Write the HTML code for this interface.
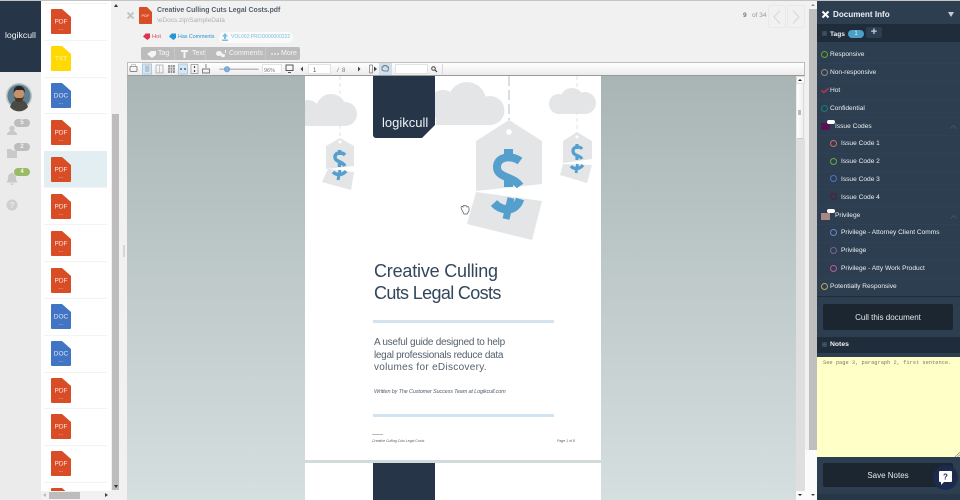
<!DOCTYPE html>
<html><head><meta charset="utf-8"><style>
*{box-sizing:border-box}
html,body{margin:0;padding:0;width:960px;height:500px;overflow:hidden;background:#f1f1f1;font-family:"Liberation Sans",sans-serif}
.a{position:absolute}
.t{position:absolute;color:#edf0f3;font-size:6.600px;white-space:nowrap;line-height:10px;margin-top:1px}
.r{position:absolute;width:7px;height:7px;border-radius:50%;border:1.300px solid}
.ln{position:absolute;left:817px;width:143px;height:1px;background:#2f4154}
.pt{position:absolute;color:#2f4053;white-space:nowrap}
</style></head><body>
<div class="a" style="left:0;top:0;width:960px;height:1px;background:#c4c4c4;z-index:5"></div>

<!-- left rail -->
<div class="a" style="left:0;top:0;width:41px;height:500px;background:#ebebeb"></div>
<div class="a" style="left:0;top:1px;width:41px;height:71px;background:#263648"></div>
<div class="a" style="left:5px;top:30px;color:#f2f4f6;font-size:8.700px;line-height:11px">logikcull</div>
<svg class="a" style="left:0;top:80px" width="41" height="140" viewBox="0 0 41 140">
<circle cx="19" cy="16" r="13" fill="#b9c2c4"/><circle cx="19" cy="16" r="11.500" fill="#5f7f8f"/>
<path d="M10 27c2-6 5-7 9-7s7 1 9 7a11.500 11.500 0 0 1-18 0z" fill="#4b4a42"/>
<ellipse cx="19" cy="14" rx="5" ry="6.500" fill="#c4916a"/><path d="M13.500 13c0-6 3-7 5.500-7s6 1 6 7l-2-3h-7z" fill="#2e2620"/><path d="M14 16c1 5 3 6 5 6s4-1 5-6l-2 2h-6z" fill="#4a3628"/>
<circle cx="12" cy="48.500" r="2.800" fill="#c9c9c9"/><path d="M7 55c0-3 2-4 5-4s5 1 5 4z" fill="#c9c9c9"/>
<path d="M7 69h4l1.500 1.500H17V78H7z" fill="#c9c9c9"/>
<path d="M12 92.500a1 1 0 0 1 1 1c3 .5 3 3 3 5s1 3 1.500 4h-11c.5-1 1.500-2 1.500-4s0-4.500 3-5a1 1 0 0 1 1-1z" fill="#c9c9c9"/><path d="M10.500 103.500h3a1.500 1.500 0 0 1-3 0z" fill="#c9c9c9"/>
<circle cx="12" cy="125" r="5.500" fill="#cfcfcf"/>
<text x="12" y="128" font-family="Liberation Sans" font-size="8" font-weight="bold" fill="#ebebeb" text-anchor="middle">?</text>
</svg>
<div class="a" style="left:14px;top:119px;width:16px;height:8px;border-radius:4px;background:#bdbdbd;color:#f3f3f3;font-size:6px;line-height:8px;text-align:center;font-weight:bold">5</div>
<div class="a" style="left:14px;top:143px;width:16px;height:8px;border-radius:4px;background:#bdbdbd;color:#f3f3f3;font-size:6px;line-height:8px;text-align:center;font-weight:bold">2</div>
<div class="a" style="left:14px;top:168px;width:16px;height:8px;border-radius:4px;background:#99bb66;color:#f3f3f3;font-size:6px;line-height:8px;text-align:center;font-weight:bold">4</div>

<!-- file list -->
<div class="a" style="left:41px;top:1px;width:70px;height:490px;background:#fff;overflow:hidden">
<svg width="70" height="499" viewBox="41 1 70 499" style="position:absolute;left:0;top:0">
<rect x="44" y="151" width="63" height="36.500" fill="#e3eef2"/>
<path stroke="#f3f3f3" stroke-width="1" d="M44 3.500h63M44 40.500h63M44 77.500h63M44 113.500h63M44 187.500h63M44 224.500h63M44 261.500h63M44 298.500h63M44 335.500h63M44 372.500h63M44 408.500h63M44 445.500h63M44 482.500h63"/>
<g font-family="Liberation Sans" font-size="6.500" text-anchor="middle" fill="#fde9e2">
<g transform="translate(0,9)"><path d="M52 0h10l9 8v16a1 1 0 0 1-1 1H52a1 1 0 0 1-1-1V1a1 1 0 0 1 1-1z" fill="#d84c26"/><text x="61" y="14.500">PDF</text><text x="61" y="21" font-size="5">...</text></g>
<g transform="translate(0,46)" fill="#fff6c0"><path d="M52 0h10l9 8v16a1 1 0 0 1-1 1H52a1 1 0 0 1-1-1V1a1 1 0 0 1 1-1z" fill="#ffd900"/><text x="61" y="14.500">TXT</text><text x="61" y="21" font-size="5">...</text></g>
<g transform="translate(0,83)" fill="#dbe6f6"><path d="M52 0h10l9 8v16a1 1 0 0 1-1 1H52a1 1 0 0 1-1-1V1a1 1 0 0 1 1-1z" fill="#4274c4"/><text x="61" y="14.500">DOC</text><text x="61" y="21" font-size="5">...</text></g>
<g transform="translate(0,120)"><path d="M52 0h10l9 8v16a1 1 0 0 1-1 1H52a1 1 0 0 1-1-1V1a1 1 0 0 1 1-1z" fill="#d84c26"/><text x="61" y="14.500">PDF</text><text x="61" y="21" font-size="5">...</text></g>
<g transform="translate(0,157)"><path d="M52 0h10l9 8v16a1 1 0 0 1-1 1H52a1 1 0 0 1-1-1V1a1 1 0 0 1 1-1z" fill="#d84c26"/><text x="61" y="14.500">PDF</text><text x="61" y="21" font-size="5">...</text></g>
<g transform="translate(0,194)"><path d="M52 0h10l9 8v16a1 1 0 0 1-1 1H52a1 1 0 0 1-1-1V1a1 1 0 0 1 1-1z" fill="#d84c26"/><text x="61" y="14.500">PDF</text><text x="61" y="21" font-size="5">...</text></g>
<g transform="translate(0,231)"><path d="M52 0h10l9 8v16a1 1 0 0 1-1 1H52a1 1 0 0 1-1-1V1a1 1 0 0 1 1-1z" fill="#d84c26"/><text x="61" y="14.500">PDF</text><text x="61" y="21" font-size="5">...</text></g>
<g transform="translate(0,268)"><path d="M52 0h10l9 8v16a1 1 0 0 1-1 1H52a1 1 0 0 1-1-1V1a1 1 0 0 1 1-1z" fill="#d84c26"/><text x="61" y="14.500">PDF</text><text x="61" y="21" font-size="5">...</text></g>
<g transform="translate(0,304)" fill="#dbe6f6"><path d="M52 0h10l9 8v16a1 1 0 0 1-1 1H52a1 1 0 0 1-1-1V1a1 1 0 0 1 1-1z" fill="#4274c4"/><text x="61" y="14.500">DOC</text><text x="61" y="21" font-size="5">...</text></g>
<g transform="translate(0,341)" fill="#dbe6f6"><path d="M52 0h10l9 8v16a1 1 0 0 1-1 1H52a1 1 0 0 1-1-1V1a1 1 0 0 1 1-1z" fill="#4274c4"/><text x="61" y="14.500">DOC</text><text x="61" y="21" font-size="5">...</text></g>
<g transform="translate(0,378)"><path d="M52 0h10l9 8v16a1 1 0 0 1-1 1H52a1 1 0 0 1-1-1V1a1 1 0 0 1 1-1z" fill="#d84c26"/><text x="61" y="14.500">PDF</text><text x="61" y="21" font-size="5">...</text></g>
<g transform="translate(0,414)"><path d="M52 0h10l9 8v16a1 1 0 0 1-1 1H52a1 1 0 0 1-1-1V1a1 1 0 0 1 1-1z" fill="#d84c26"/><text x="61" y="14.500">PDF</text><text x="61" y="21" font-size="5">...</text></g>
<g transform="translate(0,451)"><path d="M52 0h10l9 8v16a1 1 0 0 1-1 1H52a1 1 0 0 1-1-1V1a1 1 0 0 1 1-1z" fill="#d84c26"/><text x="61" y="14.500">PDF</text><text x="61" y="21" font-size="5">...</text></g>
<g transform="translate(0,488)"><path d="M52 0h10l9 8v16a1 1 0 0 1-1 1H52a1 1 0 0 1-1-1V1a1 1 0 0 1 1-1z" fill="#d84c26"/></g>
</g>
</svg>
</div>
<div class="a" style="left:111px;top:1px;width:9px;height:489px;background:#f1f1f1"></div>
<div class="a" style="left:112px;top:114px;width:7px;height:376px;background:#bdbdbd"></div>
<div class="a" style="left:114px;top:4px;border:2.500px solid transparent;border-bottom:3px solid #333;border-top:0"></div>
<div class="a" style="left:114px;top:485px;border:2.500px solid transparent;border-top:3px solid #333;border-bottom:0"></div>
<div class="a" style="left:41px;top:491px;width:79px;height:9px;background:#f1f1f1"></div>
<div class="a" style="left:49px;top:492px;width:31px;height:7px;background:#bdbdbd"></div>
<div class="a" style="left:43px;top:493px;border:2.500px solid transparent;border-right:3px solid #bbb;border-left:0"></div>
<div class="a" style="left:105px;top:493px;border:2.500px solid transparent;border-left:3px solid #444;border-right:0"></div>

<!-- header -->
<svg class="a" style="left:126px;top:11px" width="9" height="9" viewBox="0 0 9 9"><path d="M1.500 1.500l6 6M7.500 1.500l-6 6" stroke="#c4c4c4" stroke-width="2"/></svg>
<svg class="a" style="left:139px;top:7px" width="13" height="17" viewBox="0 0 13 17"><path d="M.8 0H8l5 5v11.200a.8.8 0 0 1-.8.800H.8a.8.8 0 0 1-.8-.800V.8A.8.8 0 0 1 .8 0z" fill="#d84c26"/><text x="6.500" y="10" font-family="Liberation Sans" font-size="4" fill="#fbe4dc" text-anchor="middle">PDF</text></svg>
<div class="a" style="left:157px;top:5px;font-size:6.900px;font-weight:bold;color:#55606c;line-height:11px;white-space:nowrap">Creative Culling Cuts Legal Costs.pdf</div>
<div class="a" style="left:157px;top:16px;font-size:6.500px;color:#b0b0b0;line-height:10px">\eDocs.zip\SampleData</div>

<svg class="a" style="left:143px;top:33px" width="7" height="7" viewBox="0 0 8 8"><path d="M0 4l3-3.500h5v5l-3 2.500z" fill="#e0334d"/></svg>
<div class="a" style="left:152px;top:32px;font-size:5.800px;color:#e0485f;line-height:10px">Hot</div>
<svg class="a" style="left:169px;top:33px" width="7" height="7" viewBox="0 0 8 8"><path d="M0 4l3-3.500h5v5l-3 2.500z" fill="#2298d0"/></svg>
<div class="a" style="left:178px;top:32px;font-size:5.300px;color:#2298d0;line-height:10px;white-space:nowrap">Has Comments</div>
<div class="a" style="left:219px;top:32px;width:74px;height:11px;border-radius:6px;background:#fafafa"></div>
<svg class="a" style="left:221px;top:33px" width="8" height="8" viewBox="0 0 8 8"><path d="M4 0l3 3.500H5V6H3V3.500H1zM1 6.500h6V8H1z" fill="#79c0dd"/></svg>
<div class="a" style="left:231px;top:32px;font-size:5px;color:#79c0dd;line-height:10px;white-space:nowrap">VOL002:PROD000000222</div>

<div class="a" style="left:141px;top:47px;width:159px;height:13px;background:#bcbcbc;border-radius:2px"></div>
<div class="a" style="left:174px;top:47px;width:1px;height:13px;background:#c8c8c8"></div>
<div class="a" style="left:205px;top:47px;width:1px;height:13px;background:#c8c8c8"></div>
<div class="a" style="left:265px;top:47px;width:1px;height:13px;background:#c8c8c8"></div>
<div class="a" style="left:158px;top:48px;font-size:7px;color:#f4f4f4;line-height:11px">Tag</div>
<div class="a" style="left:192px;top:48px;font-size:7px;color:#f4f4f4;line-height:11px">Text</div>
<div class="a" style="left:229px;top:48px;font-size:7px;color:#f4f4f4;line-height:11px">Comments</div>
<div class="a" style="left:281px;top:48px;font-size:7px;color:#f4f4f4;line-height:11px">More</div>
<svg class="a" style="left:141px;top:47px" width="159" height="13" viewBox="141 47 159 13"><path d="M147 54l4-3h5v4l-4 3z" fill="#f4f4f4"/><path d="M181 50h7v2h-2.500v6h-2v-6H181z" fill="#f4f4f4"/><ellipse cx="219" cy="53.500" rx="3" ry="2.500" fill="#f4f4f4"/><ellipse cx="223" cy="55.500" rx="2" ry="1.800" fill="#f4f4f4"/><rect x="225" y="50" width="1" height="3" fill="#f4f4f4"/><circle cx="272" cy="54" r=".9" fill="#f4f4f4"/><circle cx="275" cy="54" r=".9" fill="#f4f4f4"/><circle cx="278" cy="54" r=".9" fill="#f4f4f4"/></svg>

<div class="a" style="left:743px;top:11px;font-size:6.500px;font-weight:bold;color:#777;line-height:9px">9</div>
<div class="a" style="left:752px;top:11px;font-size:6.500px;color:#999;line-height:9px;white-space:nowrap">of 34</div>
<div class="a" style="left:768px;top:5px;width:18px;height:23px;border:1px solid #e9e9e9;border-radius:2px"></div>
<div class="a" style="left:787px;top:5px;width:18px;height:23px;border:1px solid #e9e9e9;border-radius:2px"></div>
<svg class="a" style="left:768px;top:5px" width="38" height="23" viewBox="0 0 38 23"><path d="M12 5.500L6 12l6 6.500M25 5.500l6 6.500-6 6.500" fill="none" stroke="#d6d6d6" stroke-width="1"/></svg>

<!-- viewer -->
<div class="a" style="left:127px;top:62px;width:678px;height:14px;background:linear-gradient(#fff,#ececec);border:1px solid #bdbdbd;border-bottom-color:#999"></div>
<svg class="a" style="left:127px;top:62px" width="320" height="14" viewBox="127 62 320 14">
<rect x="130" y="66.500" width="7" height="5" rx="1" fill="none" stroke="#888"/><rect x="131.500" y="64.500" width="4" height="2" fill="none" stroke="#aaa" stroke-width=".6"/>
<rect x="142.500" y="64" width="9" height="10" fill="#d7e6f3" stroke="#9cc0df" stroke-width=".8"/><rect x="145" y="65.500" width="4.500" height="6.500" fill="#b7c5cf"/>
<rect x="156" y="65" width="7" height="8" fill="none" stroke="#aaa" stroke-width=".8"/><path d="M159.500 65v8" stroke="#bbb" stroke-width=".8"/>
<rect x="168" y="65" width="7" height="8" fill="#999"/><path d="M170.300 65v8M172.600 65v8M168 67.500h7M168 70h7" stroke="#eee" stroke-width=".6"/>
<rect x="178.500" y="64" width="9" height="10" fill="#d7e6f3" stroke="#9cc0df" stroke-width=".8"/><path d="M180 69h2M186 69h-2" stroke="#444" stroke-width="1.200"/>
<rect x="191" y="64.500" width="7" height="9" fill="none" stroke="#999" stroke-width=".8"/><path d="M194.500 66v2M194.500 72v-2" stroke="#444" stroke-width="1.200"/>
<path d="M202.500 69h7v4h-7zM206 64v4" fill="none" stroke="#777" stroke-width=".9"/>
<path d="M219.500 69.300h39" stroke="#bbb" stroke-width="1.500"/><circle cx="227" cy="69.300" r="2.700" fill="#7fb0dd" stroke="#5e96c8" stroke-width=".6"/>
<rect x="262.500" y="64.500" width="19" height="9" fill="#fff" stroke="#ddd" stroke-width=".8"/>
<rect x="286" y="65" width="7" height="5.500" fill="none" stroke="#555" stroke-width="1"/><path d="M288 72.500h3" stroke="#555"/>
<path d="M303 66.500v5l-2.500-2.500zM358 66.500v5l2.500-2.500z" fill="#444"/>
<rect x="308.500" y="64.500" width="22" height="9" fill="#fff" stroke="#ddd" stroke-width=".8"/>
<text x="337" y="72" font-family="Liberation Sans" font-size="6" font-style="italic" fill="#777">/</text><text x="342" y="72" font-family="Liberation Sans" font-size="6" fill="#777">8</text>
<text x="313" y="72" font-family="Liberation Sans" font-size="6" fill="#555">1</text><text x="264" y="72" font-family="Liberation Sans" font-size="5.500" fill="#777">96%</text>
<path d="M369.500 65v8M369.500 65h3M369.500 73h3M372.500 65v8" stroke="#777" fill="none" stroke-width=".7"/><path d="M374 66.500v5l3-2.500z" fill="#444"/>
<rect x="379.500" y="63.500" width="12" height="11" fill="#cfe0f0" stroke="#bcd2e6" stroke-width=".6"/><path d="M382 70v-3h1v-1h1v-.500h2v.5h1v1h1.500l-.5 4h-4z" fill="none" stroke="#666" stroke-width=".8"/>
<rect x="395.500" y="64.500" width="32" height="9" fill="#fff" stroke="#ddd" stroke-width=".8"/>
<circle cx="433.500" cy="68.500" r="1.800" fill="none" stroke="#444" stroke-width="1"/><path d="M435 70l2 2" stroke="#444" stroke-width="1.200"/><path d="M442.500 64v10" stroke="#d8d8d8" stroke-width="1"/>
</svg>
<div class="a" style="left:127px;top:76px;width:669px;height:424px;background:linear-gradient(#a9b5b5,#d6dfdf)"></div>
<div class="a" style="left:796px;top:76px;width:9px;height:424px;background:#ececec"></div>
<div class="a" style="left:796px;top:76px;width:9px;height:8px;background:#fafafa;border:1px solid #ddd"></div>
<div class="a" style="left:798px;top:79px;border:2px solid transparent;border-bottom:2.500px solid #222;border-top:0"></div>
<div class="a" style="left:797px;top:84px;width:7px;height:55px;background:linear-gradient(90deg,#fff,#eee);border-right:1px solid #ddd;border-bottom:1px solid #ccc"></div>
<div class="a" style="left:798px;top:110px;width:3px;height:5px;background:#bbb"></div>
<div class="a" style="left:796px;top:139px;width:9px;height:352px;background:#dfdfdf"></div>
<div class="a" style="left:796px;top:491px;width:9px;height:9px;background:#fafafa"></div>
<div class="a" style="left:798px;top:494px;border:2px solid transparent;border-top:2.500px solid #222;border-bottom:0"></div>
<div class="a" style="left:123px;top:245px;width:2px;height:12px;background:#d6d6d6"></div>

<!-- page -->
<div class="a" style="left:305px;top:76px;width:296px;height:384px;background:#fff"></div>
<div class="a" style="left:305px;top:463px;width:296px;height:37px;background:#fff"></div>
<div class="a" style="left:373px;top:463px;width:62px;height:37px;background:#263648"></div>
<svg class="a" style="left:305px;top:76px" width="296" height="170" viewBox="305 76 296 170">
<g fill="#e4e5e7">
<circle cx="331" cy="109" r="15"/><circle cx="345" cy="114" r="12"/><circle cx="308" cy="112" r="12"/><rect x="305" y="112" width="40" height="14"/>
<circle cx="467" cy="101" r="19"/><circle cx="490" cy="110.500" r="14.500"/><circle cx="443" cy="105" r="15"/><rect x="436" y="105" width="54" height="20"/>
<circle cx="572" cy="100" r="12"/><circle cx="585" cy="103" r="11"/><circle cx="559" cy="104" r="10"/><rect x="559" y="104" width="26" height="10"/>
</g>
<path d="M340 76v62" stroke="#e2e3e5" stroke-width="1" stroke-dasharray="4 3"/>
<path d="M509 76v44" stroke="#dcdddf" stroke-width="2" stroke-dasharray="10 4"/>
<path d="M577 76v56" stroke="#e2e3e5" stroke-width="1" stroke-dasharray="4 3"/>
<path d="M373 76h62v49l-13 13h-46a3 3 0 0 1-3-3z" fill="#263648"/>
<g fill="#e4e5e7">
<path d="M326 146l14-8 14 8v20l-28 3z"/><path d="M328 169l26 3-3 18-29-8z"/>
<path d="M476 141l33-21 33 21v43l-66 7z"/><path d="M476 192l66 9-10 39-65-16z"/>
<path d="M563 141l14-9 15 9v18l-29 4z"/><path d="M563 164l29 1-5 18-27-8z"/>
</g>
<circle cx="340" cy="142" r="1.500" fill="#fff"/><circle cx="509" cy="132" r="2.800" fill="#fff"/><circle cx="577" cy="137" r="1.500" fill="#fff"/>
<g fill="none" stroke="#549fcd">
<path d="M520 161C512 155 497 156 497 167C497 178 513 176 520 186" stroke-width="8"/>
<path d="M508.500 149v12M508.500 177v10" stroke-width="9"/>
<path d="M494 203C502 212 516 212 520 199" stroke-width="8.500"/>
<path d="M511 198l-5 21" stroke-width="7"/>
<path d="M345 155C342 152 335 152 335 157C335 162 342 161 345 166" stroke-width="3.500"/>
<path d="M339.500 150v5M339.500 163v4" stroke-width="3.500"/>
<path d="M333 172C337 176 343 175 346 171" stroke-width="3.500"/>
<path d="M340 170l-2 10" stroke-width="3"/>
<path d="M582 149C580 146 573 146 573 151C573 156 580 155 582 159" stroke-width="3.200"/>
<path d="M577 144v5M577 156v4" stroke-width="3.200"/>
<path d="M571 166C574 170 580 169 583 165" stroke-width="3.200"/>
<path d="M577.500 164l-1.500 9" stroke-width="2.800"/>
</g>
<path d="M461 208c0-2 1-2 2-1v-1c1-1 2 0 2 0 1-1 2 0 2 1 1-1 2 0 2 1v3l-2 3h-3z" fill="#fff" stroke="#555" stroke-width=".7"/>
</svg>
<div class="a" style="left:382px;top:114px;color:#f0f2f5;font-size:13px;line-height:17px;z-index:2">logikcull</div>

<div class="pt" style="left:374px;top:261px;font-size:18px;line-height:21.500px;color:#33465a"><span style="letter-spacing:-.2px">Creative Culling</span><br><span style="letter-spacing:-.65px">Cuts Legal Costs</span></div>
<div class="a" style="left:373px;top:320px;width:181px;height:3px;background:#d3e3ef"></div>
<div class="pt" style="left:374px;top:337px;font-size:10px;line-height:12.500px;color:#55616c"><span style="letter-spacing:-.26px">A useful guide designed to help</span><br><span style="letter-spacing:-.3px">legal professionals reduce data</span><br><span style="letter-spacing:.3px">volumes for eDiscovery.</span></div>
<div class="pt" style="left:374px;top:388px;font-size:5.500px;line-height:8px;font-style:italic;letter-spacing:-.15px;color:#55616c">Written by The Customer Success Team at Logikcull.com</div>
<div class="a" style="left:373px;top:414px;width:181px;height:3px;background:#d3e3ef"></div>
<div class="a" style="left:372px;top:434px;width:11px;height:1px;background:#bbb"></div>
<div class="pt" style="left:372px;top:439px;font-size:3.500px;line-height:5px;font-style:italic;color:#55616c">Creative Culling Cuts Legal Costs</div>
<div class="pt" style="left:557px;top:439px;font-size:3.500px;line-height:5px;font-style:italic;color:#55616c">Page 1 of 8</div>

<!-- outer scroll -->
<div class="a" style="left:805px;top:1px;width:12px;height:499px;background:#f1f1f1"></div>
<div class="a" style="left:809px;top:9px;width:8px;height:441px;background:#bfbfbf"></div>
<div class="a" style="left:809px;top:1px;width:8px;height:8px;background:#f3f3f3"></div>
<div class="a" style="left:811px;top:4px;border:2px solid transparent;border-bottom:2px solid #888;border-top:0"></div>
<div class="a" style="left:805px;top:450px;width:12px;height:50px;background:#fbfbfb"></div>
<div class="a" style="left:811px;top:494px;border:2px solid transparent;border-top:2.500px solid #444;border-bottom:0"></div>

<!-- right panel -->
<div class="a" style="left:817px;top:1px;width:143px;height:499px;background:#2c3e50"></div>
<div class="a" style="left:817px;top:24px;width:143px;height:18px;background:#1f2d3b"></div>
<svg class="a" style="left:821px;top:10px" width="9" height="9" viewBox="0 0 9 9"><path d="M1.500 1.500l6 6M7.500 1.500l-6 6" stroke="#fff" stroke-width="2"/></svg>
<div class="a" style="left:833px;top:9px;color:#eef1f4;font-size:8.100px;font-weight:bold;line-height:12px;white-space:nowrap">Document Info</div>
<div class="a" style="left:948px;top:12px;border:4px solid transparent;border-top:5px solid #c5ccd3;border-bottom:0;border-left-width:3px;border-right-width:3px"></div>
<svg class="a" style="left:822px;top:31px" width="5" height="5" viewBox="0 0 5 5"><path d="M0 1h5M0 2.500h5M0 4h5" stroke="#4c5c6c" stroke-width=".8"/><path d="M1 0v5M2.500 0v5M4 0v5" stroke="#4c5c6c" stroke-width=".5"/></svg>
<div class="a" style="left:830px;top:29px;color:#eef1f4;font-size:6.600px;font-weight:bold;line-height:11px">Tags</div>
<div class="a" style="left:848px;top:30px;width:16px;height:8px;border-radius:4px;background:#4aa0c8;color:#e8f4fa;font-size:6px;line-height:8px;text-align:center">1</div>
<div class="a" style="left:866px;top:27px;width:16px;height:11px;border-radius:2px;background:#2c3e50;color:#c9d0d6;font-size:11px;font-weight:bold;line-height:11px;text-align:center">+</div>

<div class="r" style="left:821px;top:51px;border-color:#6aa52a"></div><div class="t" style="left:830px;top:49px">Responsive</div>
<div class="r" style="left:821px;top:69px;border-color:#9c8a8a"></div><div class="t" style="left:830px;top:67px">Non-responsive</div>
<svg class="a" style="left:821px;top:87px" width="8" height="7" viewBox="0 0 8 7"><path d="M.5 3.500l2.300 2L7.500 1.500" fill="none" stroke="#c0304f" stroke-width="1.500"/></svg><div class="t" style="left:830px;top:85px">Hot</div>
<div class="r" style="left:821px;top:105px;border-color:#1c7a78"></div><div class="t" style="left:830px;top:103px">Confidential</div>
<div class="a" style="left:821px;top:123px;width:9px;height:7px;background:#5a1257"></div><div class="a" style="left:827px;top:120px;width:8px;height:4px;border-radius:2px;background:#fff"></div><div class="t" style="left:835px;top:121px">Issue Codes</div>
<svg class="a" style="left:950px;top:125px" width="7" height="4" viewBox="0 0 7 4"><path d="M.5 3.500l3-3 3 3" fill="none" stroke="#46586a" stroke-width=".8"/></svg>
<div class="r" style="left:830px;top:140px;border-color:#d86a6a"></div><div class="t" style="left:841px;top:138px">Issue Code 1</div>
<div class="r" style="left:830px;top:158px;border-color:#62b040"></div><div class="t" style="left:841px;top:156px">Issue Code 2</div>
<div class="r" style="left:830px;top:175px;border-color:#4a76c8"></div><div class="t" style="left:841px;top:174px">Issue Code 3</div>
<div class="r" style="left:830px;top:193px;border-color:#5a1a34"></div><div class="t" style="left:841px;top:192px">Issue Code 4</div>
<div class="a" style="left:821px;top:213px;width:9px;height:7px;background:#a88686"></div><div class="a" style="left:827px;top:209px;width:8px;height:4px;border-radius:2px;background:#fff"></div><div class="t" style="left:835px;top:210px">Privilege</div>
<svg class="a" style="left:950px;top:215px" width="7" height="4" viewBox="0 0 7 4"><path d="M.5 3.500l3-3 3 3" fill="none" stroke="#46586a" stroke-width=".8"/></svg>
<div class="r" style="left:830px;top:229px;border-color:#6e86c8"></div><div class="t" style="left:841px;top:227px">Privilege - Attorney Client Comms</div>
<div class="r" style="left:830px;top:247px;border-color:#76669c"></div><div class="t" style="left:841px;top:245px">Privilege</div>
<div class="r" style="left:830px;top:265px;border-color:#b85c9c"></div><div class="t" style="left:841px;top:263px">Privilege - Atty Work Product</div>
<div class="r" style="left:821px;top:283px;border-color:#b8a868"></div><div class="t" style="left:830px;top:281px">Potentially Responsive</div>
<div class="ln" style="top:296px;background:#1f2d3b"></div>
<div class="ln" style="top:63px"></div><div class="ln" style="top:81px"></div><div class="ln" style="top:99px"></div><div class="ln" style="top:117px"></div><div class="ln" style="top:135px"></div><div class="ln" style="top:153px"></div><div class="ln" style="top:171px"></div><div class="ln" style="top:189px"></div><div class="ln" style="top:206px"></div><div class="ln" style="top:224px"></div><div class="ln" style="top:242px"></div><div class="ln" style="top:260px"></div><div class="ln" style="top:278px"></div>

<div class="a" style="left:823px;top:304px;width:130px;height:26px;border-radius:2px;background:#1b2630;color:#e3e7ea;font-size:8px;line-height:27px;text-align:center">Cull this document</div>
<div class="a" style="left:817px;top:337px;width:143px;height:16px;background:#1f2d3b"></div>
<svg class="a" style="left:822px;top:342px" width="5" height="5" viewBox="0 0 5 5"><path d="M0 1h5M0 2.500h5M0 4h5" stroke="#4c5c6c" stroke-width=".8"/><path d="M1 0v5M2.500 0v5M4 0v5" stroke="#4c5c6c" stroke-width=".5"/></svg>
<div class="a" style="left:830px;top:339px;color:#eef1f4;font-size:6.800px;font-weight:bold;line-height:11px">Notes</div>
<div class="a" style="left:817px;top:357px;width:143px;height:100px;background:#ffffc8"></div>
<div class="a" style="left:823px;top:358px;font-family:'Liberation Mono',monospace;font-size:5.350px;line-height:10px;color:#7a7a68;white-space:nowrap">See page 3, paragraph 2, first sentence.</div>
<svg class="a" style="left:954px;top:451px" width="6" height="6" viewBox="0 0 6 6"><path d="M1 6l5-5M3.500 6L6 3.500" stroke="#888" stroke-width=".7"/></svg>
<div class="a" style="left:823px;top:463px;width:130px;height:24px;border-radius:2px;background:#1b2630;color:#e3e7ea;font-size:8px;line-height:25px;text-align:center">Save Notes</div>
<div class="a" style="left:817px;top:494px;width:143px;height:6px;background:#273746"></div>
<div class="a" style="left:933px;top:465px;width:25px;height:25px;border-radius:50%;background:#1c2a4e"></div>
<svg class="a" style="left:939px;top:471px" width="13" height="14" viewBox="0 0 13 14"><path d="M1 0h11a1 1 0 0 1 1 1v9a1 1 0 0 1-1 1H5l-3 3v-3H1a1 1 0 0 1-1-1V1a1 1 0 0 1 1-1z" fill="#fff"/><text x="6.500" y="8.500" font-family="Liberation Sans" font-size="8" font-weight="bold" fill="#1c2a4e" text-anchor="middle">?</text></svg>
</body></html>
